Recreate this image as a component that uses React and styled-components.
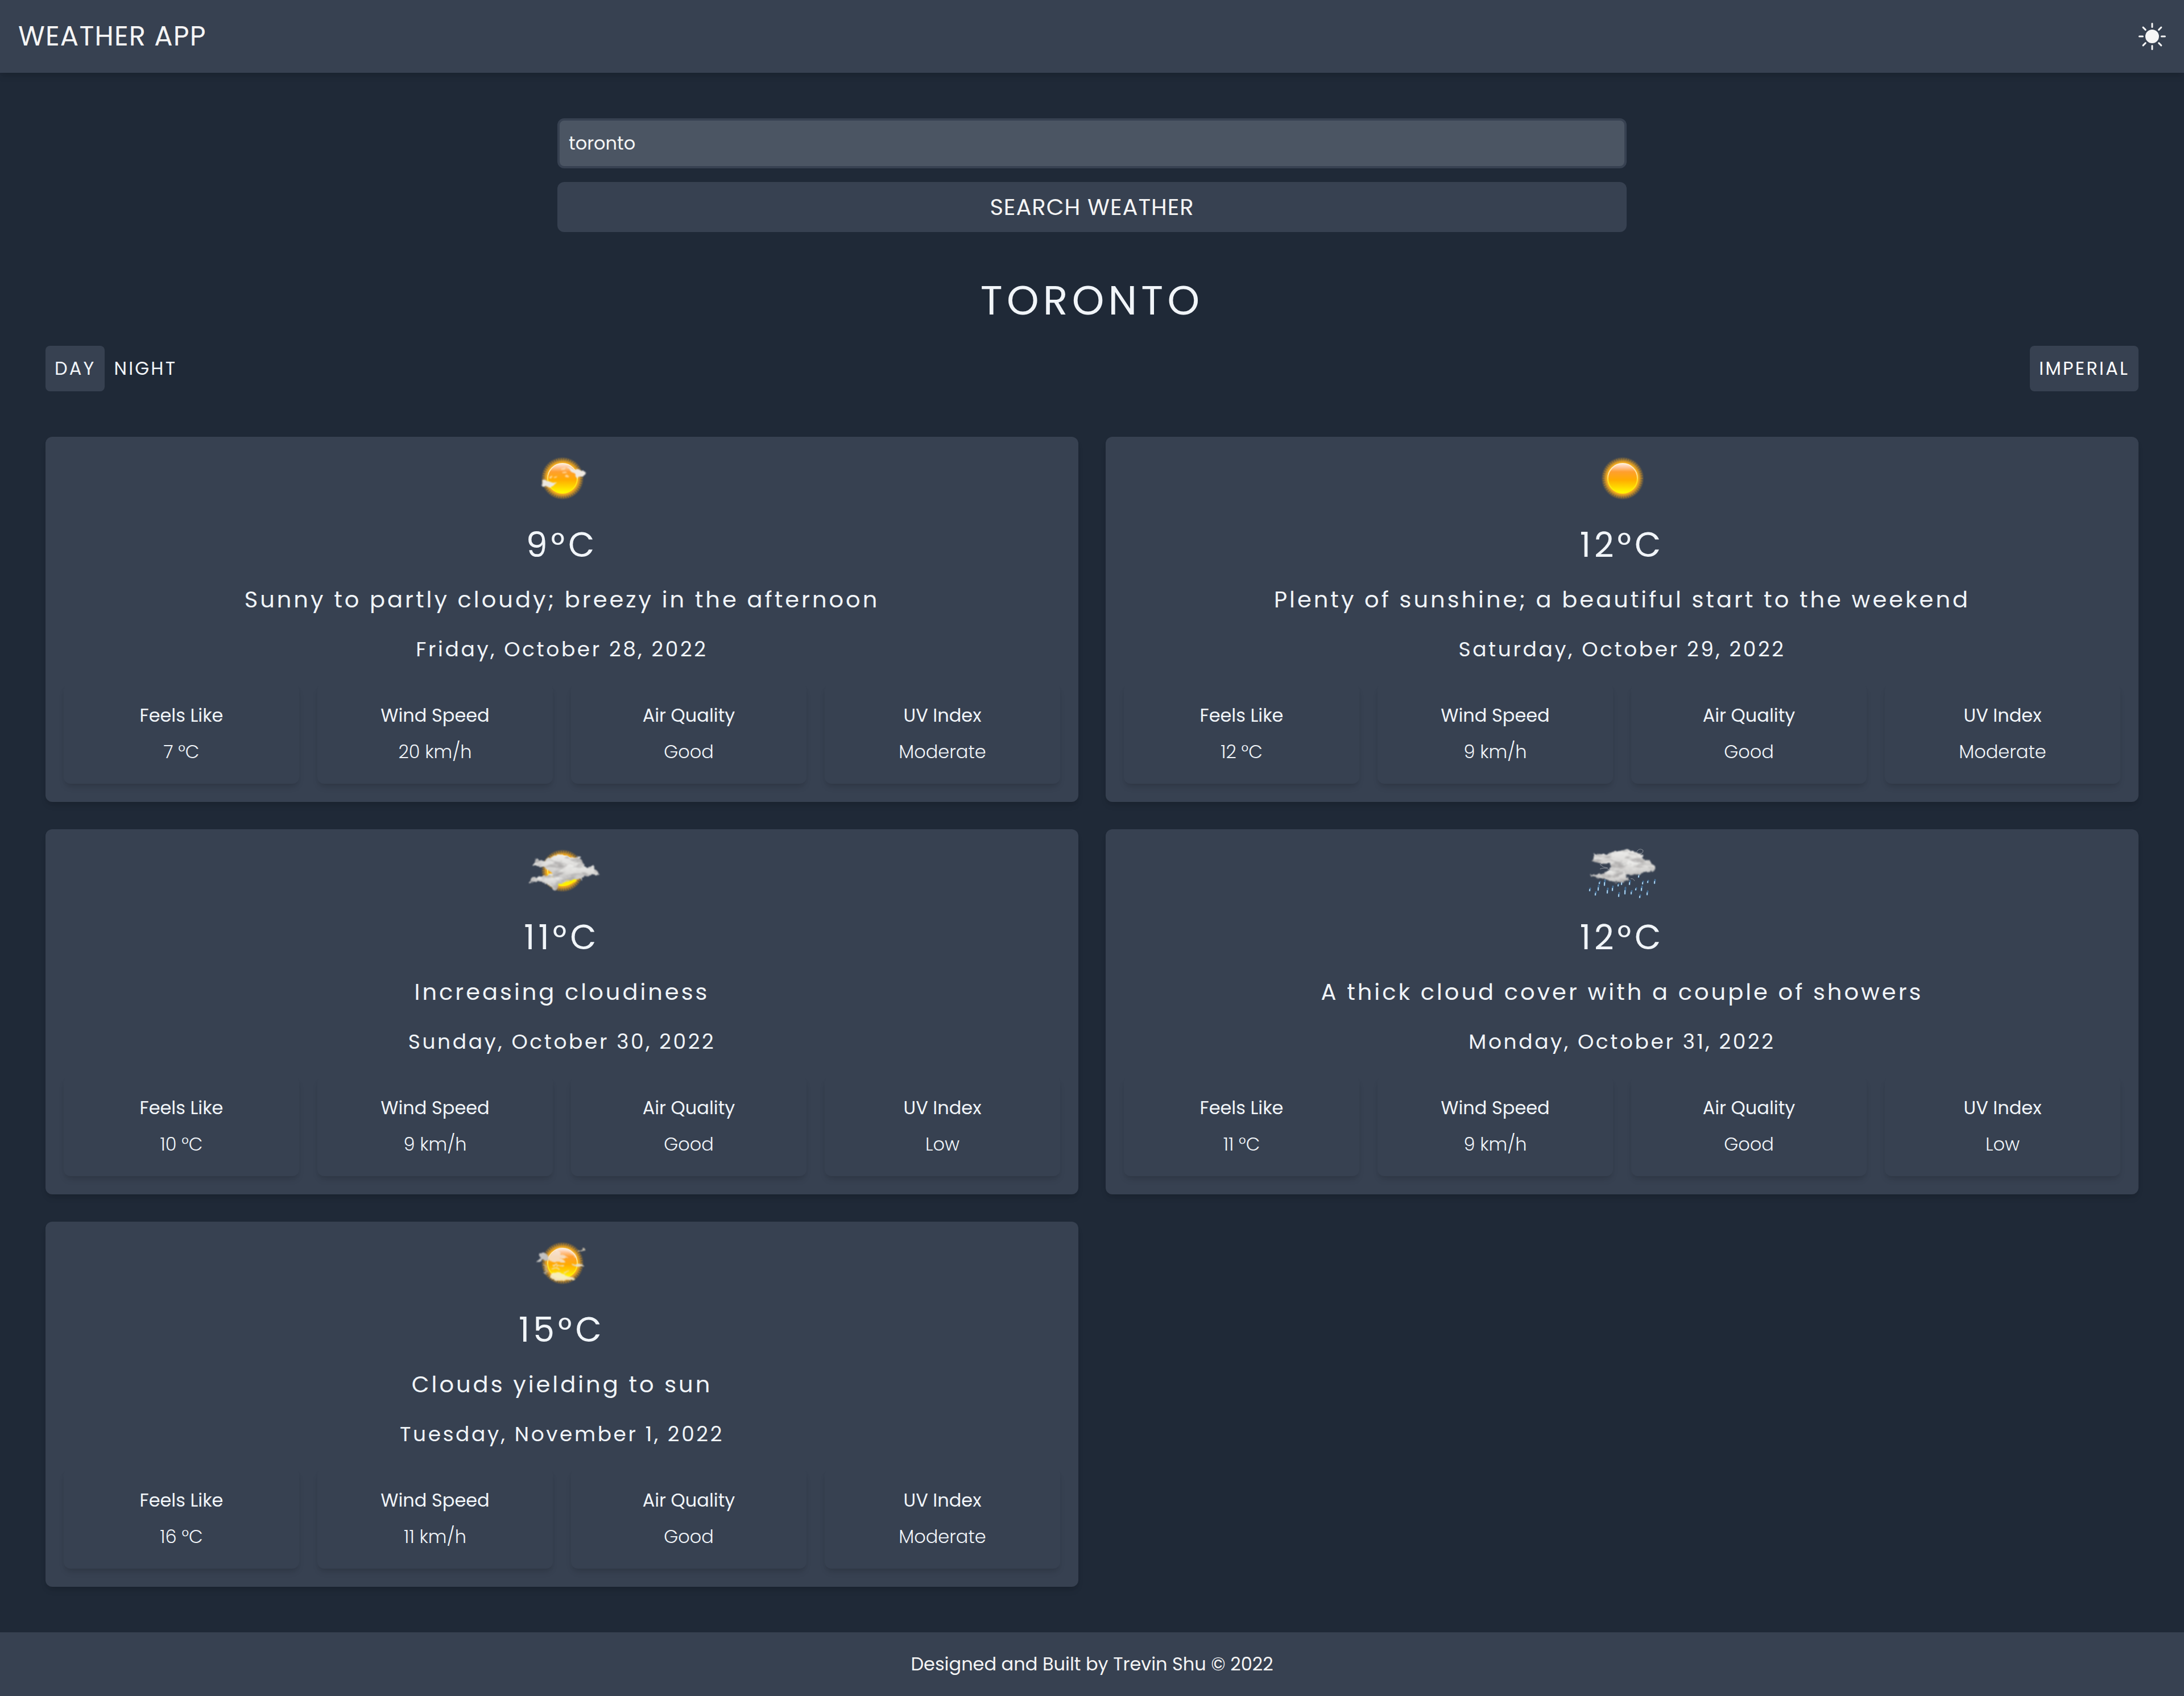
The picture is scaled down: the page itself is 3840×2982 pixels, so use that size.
import React, { useState } from "react";
import styled, { createGlobalStyle, css } from "styled-components";
import { BsSunFill } from "react-icons/bs";

const GlobalStyle = createGlobalStyle`
  *, *::before, *::after { box-sizing: border-box; }
  body {
    margin: 0;
    background: #1f2937;
    color: #f1f5f9;
    font-family: Poppins, Inter, "Liberation Sans", sans-serif;
    font-size: 32px;
    line-height: 48px;
  }
  h1, h2, p, dl, dt, dd { margin: 0; font-weight: 400; }
  button, input { font: inherit; color: inherit; margin: 0; }
`;

const shadow = css`
  box-shadow: 0 8px 12px -2px rgba(0, 0, 0, 0.1), 0 4px 8px -4px rgba(0, 0, 0, 0.1);
`;

const Header = styled.header`
  display: flex;
  align-items: center;
  justify-content: space-between;
  padding: 32px;
  background: #374151;
  color: #f5f5f5;
  ${shadow}
`;

const Brand = styled.h1`
  font-size: 48px;
  line-height: 64px;
  letter-spacing: 0.025em;
  text-transform: uppercase;
`;

const ThemeButton = styled.button`
  display: flex;
  padding: 0;
  border: 0;
  background: none;
  font-size: 48px;
  cursor: pointer;
`;

const Main = styled.main`
  padding: 80px;
`;

const SearchForm = styled.form`
  display: grid;
  gap: 24px;
  width: calc(50% + 40px);
  margin: 0 auto 80px;
  color: #f5f5f5;
`;

const SearchInput = styled.input`
  width: 100%;
  height: 88px;
  padding: 0 16px;
  border: 4px solid #374151;
  border-radius: 12px;
  background: #4b5563;
  outline: none;
`;

const SearchButton = styled.button`
  height: 88px;
  border: 0;
  border-radius: 12px;
  background: #374151;
  font-size: 40px;
  line-height: 56px;
  letter-spacing: 0.025em;
  text-transform: uppercase;
  cursor: pointer;
`;

const City = styled.h2`
  margin-bottom: 40px;
  font-size: 72px;
  line-height: 80px;
  letter-spacing: 0.1em;
  text-align: center;
  text-transform: uppercase;
`;

const Controls = styled.div`
  display: flex;
  justify-content: space-between;
  margin-bottom: 80px;
`;

const ToggleGroup = styled.div`
  display: flex;
`;

const Toggle = styled.button`
  padding: 16px;
  border: 0;
  border-radius: 8px;
  background: ${(p) => (p.$active ? "#374151" : "transparent")};
  letter-spacing: 0.1em;
  text-transform: uppercase;
  cursor: pointer;
`;

const UnitToggle = styled(Toggle)`
  color: #ffffff;
`;

const Grid = styled.div`
  display: grid;
  grid-template-columns: repeat(2, minmax(0, 1fr));
  gap: 48px;
`;

const Card = styled.article`
  display: flex;
  flex-direction: column;
  align-items: center;
  gap: 32px;
  padding: 32px;
  border-radius: 12px;
  background: #374151;
  text-align: center;
  ${shadow}
`;

const Picture = styled.svg`
  display: block;
  width: 150px;
  height: 90px;
`;

const Temperature = styled.p`
  font-size: 60px;
  line-height: 72px;
  letter-spacing: 0.1em;
`;

const Summary = styled.p`
  font-size: 40px;
  line-height: 56px;
  letter-spacing: 0.1em;
`;

const DateLine = styled.p`
  font-size: 36px;
  line-height: 56px;
  letter-spacing: 0.1em;
`;

const Stats = styled.dl`
  display: grid;
  grid-template-columns: repeat(4, minmax(0, 1fr));
  gap: 32px;
  width: 100%;
`;

const Stat = styled.div`
  display: grid;
  gap: 16px;
  padding: 32px;
  border-radius: 12px;
  ${shadow}
`;

const StatValue = styled.dd`
  font-weight: 300;
`;

const Footer = styled.footer`
  padding: 32px;
  background: #374151;
  color: #f5f5f5;
  text-align: center;
`;

function SkyDefs({ id }) {
  return (
    <defs>
      <linearGradient id={`${id}-body`} x1="0" y1="0" x2="0" y2="1">
        <stop offset="0" stopColor="#ffeade" />
        <stop offset="0.13" stopColor="#ffc596" />
        <stop offset="0.28" stopColor="#ff9f2e" />
        <stop offset="0.55" stopColor="#ffab00" />
        <stop offset="0.8" stopColor="#ffd800" />
        <stop offset="1" stopColor="#ffff00" />
      </linearGradient>
      <linearGradient id={`${id}-rim`} x1="0" y1="0" x2="0" y2="1">
        <stop offset="0" stopColor="#fff0d8" />
        <stop offset="0.4" stopColor="#ffe08a" />
        <stop offset="0.6" stopColor="#ffe21e" />
        <stop offset="1" stopColor="#fff200" />
      </linearGradient>
      <radialGradient id={`${id}-glow`}>
        <stop offset="0.7" stopColor="#ffb820" />
        <stop offset="0.78" stopColor="#f5a81c" stopOpacity="0.85" />
        <stop offset="0.9" stopColor="#e09a20" stopOpacity="0.35" />
        <stop offset="1" stopColor="#d09020" stopOpacity="0" />
      </radialGradient>
      <filter id={`${id}-soft`} x="-20%" y="-20%" width="140%" height="140%" colorInterpolationFilters="sRGB">
        <feTurbulence type="fractalNoise" baseFrequency="0.12" numOctaves="4" seed="4" result="noise" />
        <feDisplacementMap in="SourceGraphic" in2="noise" scale="9" xChannelSelector="R" yChannelSelector="G" result="shape" />
        <feTurbulence type="fractalNoise" baseFrequency="0.05 0.11" numOctaves="3" seed="9" />
        <feColorMatrix type="matrix" values="0 0 0 0 0.62  0 0 0 0 0.61  0 0 0 0 0.61  2.2 0 0 0 -1" />
        <feComposite in2="shape" operator="in" result="shade" />
        <feMerge result="cloud">
          <feMergeNode in="shape" />
          <feMergeNode in="shade" />
        </feMerge>
        <feGaussianBlur stdDeviation="0.9" />
      </filter>
      <filter id={`${id}-blur`} x="-20%" y="-20%" width="140%" height="140%" colorInterpolationFilters="sRGB">
        <feGaussianBlur stdDeviation="0.7" />
      </filter>
      <filter id={`${id}-wisp`} x="-20%" y="-20%" width="140%" height="140%" colorInterpolationFilters="sRGB">
        <feTurbulence type="fractalNoise" baseFrequency="0.15" numOctaves="3" seed="2" result="noise" />
        <feDisplacementMap in="SourceGraphic" in2="noise" scale="4" xChannelSelector="R" yChannelSelector="G" />
        <feGaussianBlur stdDeviation="1.1" />
      </filter>
      <linearGradient id={`${id}-cloud`} x1="0" y1="0" x2="0" y2="1">
        <stop offset="0" stopColor="#eeeeec" />
        <stop offset="0.5" stopColor="#dcdbd9" />
        <stop offset="1" stopColor="#c4c3c2" />
      </linearGradient>
    </defs>
  );
}

function Sun({ id }) {
  return (
    <g>
      <circle cx="76" cy="41" r="38" fill={`url(#${id}-glow)`} />
      <circle cx="76" cy="41" r="32" fill="none" stroke="#f0a51e" strokeOpacity="0.3" strokeWidth="7" strokeDasharray="1 3" filter={`url(#${id}-blur)`} />
      <g filter={`url(#${id}-blur)`}>
        <circle cx="76" cy="41" r="26" fill={`url(#${id}-body)`} stroke={`url(#${id}-rim)`} strokeWidth="2" />
      </g>
    </g>
  );
}

function PartlySunny() {
  return (
    <Picture viewBox="0 0 150 90" aria-hidden="true">
      <SkyDefs id="partly" />
      <Sun id="partly" />
      <g filter="url(#partly-wisp)">
        <path d="M40 44 L43 45 Q46 42 50 46 Q55 46 59 49 L65 48 Q63 53 58 55 Q52 59 46 55 L41 56 L39 53 L42 50 Z" fill="#ece8e0" />
        <path d="M83 21 Q92 20 97 27 L100 25 Q107 25 109 28 L112 28 L117 33 L114 36 Q110 37 106 38 L102 41 Q99 39 99 34 Q90 28 83 21 Z" fill="#f0eae2" />
        <path d="M75 25 L80 24 M78 30 L82 31 M82 37 L86 38 M54 40 L57 38 M62 39 L65 38" fill="none" stroke="#ffe0b0" strokeWidth="3" strokeLinecap="round" strokeOpacity="0.8" />
      </g>
    </Picture>
  );
}

function Sunny() {
  return (
    <Picture viewBox="0 0 150 90" aria-hidden="true">
      <SkyDefs id="sunny" />
      <Sun id="sunny" />
    </Picture>
  );
}

function MostlyCloudy() {
  return (
    <Picture viewBox="0 0 150 90" aria-hidden="true">
      <SkyDefs id="mostly" />
      <Sun id="mostly" />
      <g filter="url(#mostly-soft)">
        <path d="M22 32 Q26 28 29 19 Q36 25 43 23 Q50 19 57 17 Q68 10 80 14 Q92 21 109 16 Q109 25 113 31 Q118 44 108 50 L70 54 Q56 50 53 40 Q44 33 22 32 Z" fill="url(#mostly-cloud)" />
        <path d="M62 50 Q64 43 72 40 Q82 31 95 30 Q106 32 114 34 Q124 37 130 32 Q133 40 140 47 Q130 50 121 49 Q112 50 110 56 Q98 59 87 58 Q76 54 62 50 Z" fill="url(#mostly-cloud)" />
        <path d="M20 56 Q27 51 38 52 Q56 46 70 51 Q82 55 86 60 Q80 65 70 64 Q70 73 64 74 Q56 74 52 66 Q38 60 20 60 Z" fill="url(#mostly-cloud)" />
      </g>
      <path d="M76 65 Q88 64 99 57" fill="none" stroke="#fff000" strokeWidth="5" filter="url(#mostly-wisp)" />
    </Picture>
  );
}

const DROPS = [
  [18, 74, 4], [28, 81, 5], [33, 71, 8], [44, 62, 9], [49, 76, 8], [58, 72, 7], [69, 83, 6],
  [74, 62, 6], [80, 76, 11], [88, 62, 6], [91, 79, 5], [99, 73, 3], [109, 72, 7], [106, 86, 4],
  [119, 80, 6], [132, 60, 6], [104, 50, 4], [111, 62, 4], [120, 60, 3], [35, 62, 3], [68, 66, 3],
];

function Showers() {
  return (
    <Picture viewBox="0 0 150 90" aria-hidden="true">
      <SkyDefs id="showers" />
      <g filter="url(#showers-blur)" strokeLinecap="round">
        {DROPS.map(([x, y, length]) => (
          <g key={`${x}-${y}`}>
            <path d={`M${x + 1} ${y - length / 2} L${x} ${y + length / 2}`} stroke="#4b86b8" strokeWidth="3" strokeOpacity="0.65" />
            <path d={`M${x} ${y} L${x} ${y + length / 2}`} stroke="#b5d8f0" strokeWidth="2" strokeOpacity="0.9" />
          </g>
        ))}
      </g>
      <g filter="url(#showers-soft)">
        <path d="M21 24 Q27 19 27 11 Q36 15 48 11 Q58 9 66 6 Q76 8 84 4 Q98 8 109 11 Q110 18 113 22 Q121 20 126 26 L136 37 Q126 44 116 42 Q104 50 86 48 Q62 48 54 40 Q58 33 54 29 Q38 26 21 24 Z" fill="url(#showers-cloud)" />
        <path d="M56 41 Q66 32 76 27 Q94 21 110 27 Q124 32 136 36 Q122 40 114 43 Q100 50 84 47 Q70 44 56 41 Z" fill="url(#showers-cloud)" />
        <path d="M20 48 Q34 48 50 41 Q68 42 80 46 Q84 52 86 57 Q74 62 60 61 Q44 54 20 50 Z" fill="url(#showers-cloud)" />
      </g>
      <path d="M101 7 Q106 0 112 5 Q113 9 108 11 M36 30 Q42 36 50 36 M36 38 Q44 34 52 39 M90 55 Q95 54 97 59" fill="none" stroke="#aeb2b8" strokeOpacity="0.7" filter="url(#showers-blur)" />
    </Picture>
  );
}

function HazySun() {
  return (
    <Picture viewBox="0 0 150 90" aria-hidden="true">
      <SkyDefs id="hazy" />
      <Sun id="hazy" />
      <g filter="url(#hazy-wisp)">
        <path d="M30 37 L37 32 L35 24 L43 22 L50 27 L52 34 L46 36 L40 35 L36 39 L29 38 Z" fill="#c3c2c1" />
        <path d="M43 44 L48 47 L46 52 L50 56 L44 58 L48 60" fill="none" stroke="#c9c0b0" strokeWidth="3" strokeOpacity="0.6" />
        <path d="M51 30 Q58 20 67 18 L73 22 L72 26 L80 27 L86 31 L78 33 L70 32 L78 35 L82 40 L74 40 L66 38 L58 39 L52 35 Z" fill="#f5e4d4" fillOpacity="0.85" />
        <path d="M56 60 Q62 55 70 57 L78 60 Q84 65 96 66 L98 69 L90 71 L84 70 Q72 73 62 71 L54 66 Z" fill="#f6eecb" fillOpacity="0.9" />
        <path d="M92 43 Q98 43 104 42 Q112 41 114 47 L106 47 Q99 48 92 43 Z" fill="#e6decb" />
        <path d="M102 19 L109 20 L114 17 M112 15 L114 18 M58 51 L64 49 L70 51 M66 46 L78 45 M80 58 L86 54 M60 46 L66 43" fill="none" stroke="#f3e2c4" strokeWidth="2" strokeLinecap="round" strokeOpacity="0.8" />
        <path d="M64 19 Q78 12 92 22 Q97 26 99 31" fill="none" stroke="#f8e8dc" strokeWidth="4" strokeOpacity="0.6" />
      </g>
    </Picture>
  );
}

const FORECAST = [
  { Icon: PartlySunny, temp: 9, text: "Sunny to partly cloudy; breezy in the afternoon", date: "Friday, October 28, 2022", feels: 7, wind: 20, air: "Good", uv: "Moderate" },
  { Icon: Sunny, temp: 12, text: "Plenty of sunshine; a beautiful start to the weekend", date: "Saturday, October 29, 2022", feels: 12, wind: 9, air: "Good", uv: "Moderate" },
  { Icon: MostlyCloudy, temp: 11, text: "Increasing cloudiness", date: "Sunday, October 30, 2022", feels: 10, wind: 9, air: "Good", uv: "Low" },
  { Icon: Showers, temp: 12, text: "A thick cloud cover with a couple of showers", date: "Monday, October 31, 2022", feels: 11, wind: 9, air: "Good", uv: "Low" },
  { Icon: HazySun, temp: 15, text: "Clouds yielding to sun", date: "Tuesday, November 1, 2022", feels: 16, wind: 11, air: "Good", uv: "Moderate" },
];

function ForecastCard({ day }) {
  const stats = [
    ["Feels Like", `${day.feels} °C`],
    ["Wind Speed", `${day.wind} km/h`],
    ["Air Quality", day.air],
    ["UV Index", day.uv],
  ];
  return (
    <Card>
      <day.Icon />
      <Temperature>{`${day.temp}°C`}</Temperature>
      <Summary>{day.text}</Summary>
      <DateLine>{day.date}</DateLine>
      <Stats>
        {stats.map(([label, value]) => (
          <Stat key={label}>
            <dt>{label}</dt>
            <StatValue>{value}</StatValue>
          </Stat>
        ))}
      </Stats>
    </Card>
  );
}

export default function App() {
  const [query, setQuery] = useState("toronto");
  const [period, setPeriod] = useState("day");

  return (
    <>
      <GlobalStyle />
      <Header>
        <Brand>Weather App</Brand>
        <ThemeButton type="button" aria-label="Switch theme">
          <BsSunFill />
        </ThemeButton>
      </Header>
      <Main>
        <SearchForm onSubmit={(event) => event.preventDefault()}>
          <SearchInput
            type="text"
            aria-label="City"
            value={query}
            onChange={(event) => setQuery(event.target.value)}
          />
          <SearchButton type="submit">Search Weather</SearchButton>
        </SearchForm>
        <City>Toronto</City>
        <Controls>
          <ToggleGroup>
            <Toggle type="button" $active={period === "day"} onClick={() => setPeriod("day")}>
              Day
            </Toggle>
            <Toggle type="button" $active={period === "night"} onClick={() => setPeriod("night")}>
              Night
            </Toggle>
          </ToggleGroup>
          <UnitToggle type="button" $active>
            Imperial
          </UnitToggle>
        </Controls>
        <Grid>
          {FORECAST.map((day) => (
            <ForecastCard key={day.date} day={day} />
          ))}
        </Grid>
      </Main>
      <Footer>Designed and Built by Trevin Shu © 2022</Footer>
    </>
  );
}
